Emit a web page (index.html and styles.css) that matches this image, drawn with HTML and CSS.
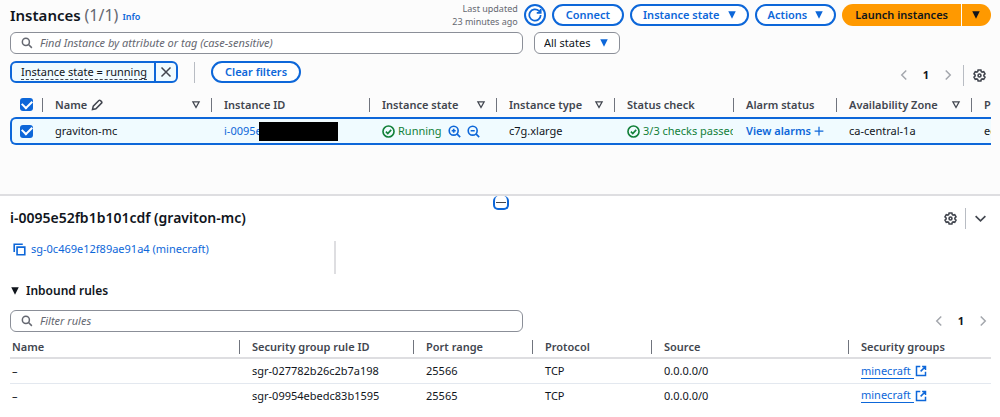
FILE: index.html
```html
<!DOCTYPE html>
<html lang="en">
<head>
<meta charset="utf-8">
<meta name="viewport" content="width=device-width, initial-scale=1">
<title>Instances</title>
<link rel="stylesheet" href="styles.css">
</head>
<body>
<svg class="sprite" aria-hidden="true">
  <symbol id="search" viewBox="0 0 16 16"><circle cx="6.5" cy="6.5" r="4.7"/><path d="M10 10l4.5 4.5"/></symbol>
  <symbol id="gear" viewBox="0 0 16 16"><path d="M6.3 1.2h3.4l.5 2 1 .6 2-.6 1.600 2.800-1.400 1.400v1.200l1.400 1.400-1.600 2.800-2-.6-1 .6-.5 2H6.300l-.5-2-1-.6-2 .6-1.600-2.800 1.400-1.400V7.400L1.200 6l1.600-2.800 2 .6 1-.6z"/><circle cx="8" cy="8" r="1.800"/></symbol>
  <symbol id="check" viewBox="0 0 16 16"><circle cx="8" cy="8" r="6.8"/><path d="M4.800 8.200l2.300 2.300 4.200-4.500"/></symbol>
  <symbol id="left" viewBox="0 0 16 16"><path d="M11 2L5 8l6 6"/></symbol>
  <symbol id="right" viewBox="0 0 16 16"><path d="M5 2l6 6-6 6"/></symbol>
  <symbol id="down" viewBox="0 0 16 16"><path d="M2 5l6 6 6-6"/></symbol>
  <symbol id="sort" viewBox="0 0 16 16"><path d="M3 3h10l-5 9z"/></symbol>
  <symbol id="caret" viewBox="0 0 16 16"><path class="solid" d="M2 2h12l-6 12z"/></symbol>
  <symbol id="external" viewBox="0 0 16 16"><path d="M7 2H2v12h12V9M9.500 2H14v4.500M14 2L7.500 8.500"/></symbol>
  <symbol id="plus" viewBox="0 0 16 16"><path d="M8 1v14M1 8h14"/></symbol>
</svg>

<section class="panel instances">
  <header class="title-bar">
    <h1>Instances <span class="count">(1/1)</span></h1>
    <a class="info" href="#info">Info</a>
    <div class="actions">
      <p class="updated">Last updated<br>23 minutes ago</p>
      <button class="btn round" aria-label="Refresh"><svg class="icon" viewBox="0 0 16 16"><path d="M14.500 8a6.500 6.500 0 1 1-2-4.700L14 5M14.500 1v4.500H10"/></svg></button>
      <button class="btn">Connect</button>
      <button class="btn menu">Instance state <svg class="icon small"><use href="#caret"/></svg></button>
      <button class="btn menu">Actions <svg class="icon small"><use href="#caret"/></svg></button>
      <div class="split">
        <button class="launch">Launch instances</button>
        <button class="launch more" aria-label="More launch options"><svg class="icon small"><use href="#caret"/></svg></button>
      </div>
    </div>
  </header>

  <div class="filters">
    <label class="search"><svg class="icon"><use href="#search"/></svg><input type="text" aria-label="Find instances" placeholder="Find Instance by attribute or tag (case-sensitive)"></label>
    <div class="select">
      <select aria-label="State"><option>All states</option></select>
      <svg class="icon small"><use href="#caret"/></svg>
    </div>
  </div>

  <div class="tokens">
    <div class="token">
      <button class="token-text"><span>Instance state = running</span></button>
      <button class="token-close" aria-label="Remove filter"><svg class="icon" viewBox="0 0 16 16"><path d="M2 2l12 12M14 2L2 14"/></svg></button>
    </div>
    <span class="rule"></span>
    <button class="btn">Clear filters</button>
    <nav class="pager raised" aria-label="Instance pages">
      <button class="plain muted" aria-label="Previous page"><svg class="icon"><use href="#left"/></svg></button>
      <button class="plain page">1</button>
      <button class="plain muted" aria-label="Next page"><svg class="icon"><use href="#right"/></svg></button>
      <span class="rule"></span>
      <button class="plain" aria-label="Preferences"><svg class="icon large"><use href="#gear"/></svg></button>
    </nav>
  </div>

  <table class="instance-table">
    <colgroup><col class="c-check"><col><col class="c-id"><col class="c-state"><col class="c-type"><col class="c-status"><col class="c-alarm"><col class="c-zone"><col class="c-last"></colgroup>
    <thead>
      <tr>
        <th><input type="checkbox" checked aria-label="Select all instances"></th>
        <th><div class="head">Name <svg class="icon" viewBox="0 0 16 16"><path d="M2 14l1-4.500L10.500 2q1-1 2 0l1.500 1.500q1 1 0 2L6.500 13z"/></svg><svg class="icon small push"><use href="#sort"/></svg></div></th>
        <th><div class="head">Instance ID</div></th>
        <th><div class="head">Instance state<svg class="icon small push"><use href="#sort"/></svg></div></th>
        <th><div class="head">Instance type<svg class="icon small push"><use href="#sort"/></svg></div></th>
        <th><div class="head">Status check</div></th>
        <th><div class="head">Alarm status</div></th>
        <th><div class="head">Availability Zone<svg class="icon small push"><use href="#sort"/></svg></div></th>
        <th><div class="head">P</div></th>
      </tr>
    </thead>
    <tbody>
      <tr>
        <td><input type="checkbox" checked aria-label="Select graviton-mc"></td>
        <td>graviton-mc</td>
        <td><div class="cell"><a href="#instance">i-0095e</a><span class="redacted"></span></div></td>
        <td><div class="cell ok"><svg class="icon large"><use href="#check"/></svg>Running
          <button class="plain zoom" aria-label="Include state"><svg class="icon large" viewBox="0 0 16 16"><circle cx="7" cy="7" r="5.500"/><path d="M11 11l4 4M4.500 7h5M7 4.500v5"/></svg></button>
          <button class="plain zoom" aria-label="Exclude state"><svg class="icon large" viewBox="0 0 16 16"><circle cx="7" cy="7" r="5.500"/><path d="M11 11l4 4M4.500 7h5"/></svg></button></div></td>
        <td>c7g.xlarge</td>
        <td><div class="cell ok"><svg class="icon large"><use href="#check"/></svg>3/3 checks passed</div></td>
        <td><a class="cell strong" href="#alarms">View alarms <svg class="icon small"><use href="#plus"/></svg></a></td>
        <td>ca-central-1a</td>
        <td>ec</td>
      </tr>
    </tbody>
  </table>
</section>

<section class="panel details">
  <button class="handle" aria-label="Resize panel"></button>
  <header class="detail-bar">
    <h2>i-0095e52fb1b101cdf (graviton-mc)</h2>
    <div class="tools">
      <button class="plain" aria-label="Panel preferences"><svg class="icon large"><use href="#gear"/></svg></button>
      <span class="rule"></span>
      <button class="plain" aria-label="Collapse panel"><svg class="icon large"><use href="#down"/></svg></button>
    </div>
  </header>

  <div class="groups">
    <div class="group">
      <button class="plain copy" aria-label="Copy"><svg class="icon large" viewBox="0 0 16 16"><path d="M5 5h9.500v9.500H5zM1.500 11V1.500H12"/></svg></button>
      <a href="#group">sg-0c469e12f89ae91a4 (minecraft)</a>
    </div>
  </div>

  <details open>
    <summary><svg class="icon small"><use href="#caret"/></svg>Inbound rules</summary>
    <div class="filters rules-filter">
      <label class="search"><svg class="icon"><use href="#search"/></svg><input type="text" aria-label="Filter rules" placeholder="Filter rules"></label>
      <nav class="pager" aria-label="Rule pages">
        <button class="plain muted" aria-label="Previous page"><svg class="icon"><use href="#left"/></svg></button>
        <button class="plain page">1</button>
        <button class="plain muted" aria-label="Next page"><svg class="icon"><use href="#right"/></svg></button>
      </nav>
    </div>
    <table class="rules-table">
      <colgroup><col class="r-name"><col class="r-id"><col class="r-port"><col class="r-port"><col><col class="r-group"></colgroup>
      <thead>
        <tr><th><div class="head">Name</div></th><th><div class="head">Security group rule ID</div></th><th><div class="head">Port range</div></th><th><div class="head">Protocol</div></th><th><div class="head">Source</div></th><th><div class="head">Security groups</div></th></tr>
      </thead>
      <tbody>
        <tr><td>–</td><td>sgr-027782b26c2b7a198</td><td>25566</td><td>TCP</td><td>0.0.0.0/0</td><td><a class="cell external" href="#minecraft"><span>minecraft </span><svg class="icon"><use href="#external"/></svg></a></td></tr>
        <tr><td>–</td><td>sgr-09954ebedc83b1595</td><td>25565</td><td>TCP</td><td>0.0.0.0/0</td><td><a class="cell external" href="#minecraft"><span>minecraft </span><svg class="icon"><use href="#external"/></svg></a></td></tr>
      </tbody>
    </table>
  </details>
</section>
</body>
</html>
```
FILE: styles.css
```css
:root {
  --blue: #0d67d9;
  --ink: #10151c;
  --head: #42464f;
  --grey: #8b8f98;
}

* { box-sizing: border-box; }

body {
  margin: 0;
  background: #fff;
  color: var(--ink);
  font: 11px/16px "Noto Sans", "Open Sans", sans-serif;
}

button, input, select { font: inherit; color: inherit; }
button { cursor: pointer; }
h1, h2, p { margin: 0; }
a { color: var(--blue); text-decoration: none; }

.sprite { display: none; }
.icon { width: 12px; height: 12px; flex: none; fill: none; stroke: currentColor; stroke-width: 2; }
.icon.small { width: 10px; height: 10px; }
.icon.large { width: 13px; height: 13px; }
.solid { fill: currentColor; stroke: none; }

.panel { padding: 0 9px 0 10px; }
.instances { background: #fcfcfc; padding-top: 4px; padding-bottom: 49px; }

.title-bar { display: flex; align-items: center; height: 22px; }
h1 { font-size: 15px; line-height: 22px; font-weight: 600; }
.count { color: #656871; font-size: 16px; font-weight: 400; }
.info { margin: 4px 0 0 4px; font-size: 9px; font-weight: 600; }
.actions { display: flex; align-items: center; gap: 6px; margin-left: auto; }
.updated { color: #656871; font-size: 9px; line-height: 13px; text-align: right; }

.btn {
  display: flex;
  align-items: center;
  gap: 7px;
  height: 22px;
  padding: 0 12px;
  border: 2px solid var(--blue);
  border-radius: 11px;
  background: #fff;
  color: var(--blue);
  font-weight: 600;
  white-space: nowrap;
}
.btn.menu { padding: 0 10px 0 11px; }
.btn.round { width: 22px; padding: 0; justify-content: center; }
.btn.round .icon { width: 14px; height: 14px; }

.split { display: flex; gap: 1px; }
.launch {
  height: 22px;
  padding: 0 13px;
  border: 0;
  border-radius: 11px 0 0 11px;
  background: #ff9900;
  font-weight: 600;
}
.launch.more { display: flex; align-items: center; width: 29px; padding: 0 9px; border-radius: 0 11px 11px 0; }

.filters { display: flex; align-items: center; gap: 11px; margin-top: 6px; }
.search {
  display: flex;
  align-items: center;
  gap: 7px;
  flex: 0 1 513px;
  height: 22px;
  padding: 0 10px;
  border: 1px solid var(--grey);
  border-radius: 6px;
  background: #fff;
  color: #656871;
}
.search input { flex: 1; min-width: 0; padding: 0; border: 0; outline: 0; background: none; }
.search input::placeholder { color: #656871; font-style: italic; opacity: 1; }
.select { display: grid; align-items: center; color: var(--blue); }
.select > * { grid-area: 1 / 1; }
.select select {
  appearance: none;
  width: 86px;
  height: 22px;
  padding: 0 9px;
  border: 1px solid var(--grey);
  border-radius: 6px;
  background: #fff;
  color: var(--ink);
}
.select .icon { justify-self: end; margin-right: 11px; pointer-events: none; }

.tokens { display: flex; align-items: center; gap: 16px; height: 22px; margin-top: 7px; }
.token {
  display: flex;
  height: 22px;
  border: 2px solid var(--blue);
  border-radius: 6px;
  background: #f0fbff;
}
.token button { padding: 0 7px 0 9px; border: 0; background: none; }
.token .token-close { display: flex; align-items: center; padding: 0 4px; border-left: 2px solid var(--blue); color: var(--head); }
.token-text span { display: block; line-height: 15px; border-bottom: 1px dashed var(--head); }
.rule { width: 1px; height: 21px; background: #b8bcc3; }

.plain { display: flex; padding: 0; border: 0; background: none; color: var(--head); }
.pager { display: flex; align-items: center; gap: 13px; margin-left: auto; padding-right: 2px; }
.pager.raised { gap: 9px; padding: 6px 5px 0 0; }
.pager.raised .page { padding: 0 4px; }
.muted { color: #a4a7ad; }
.page { color: var(--ink); font-weight: 700; }

table { width: 100%; table-layout: fixed; border-collapse: separate; border-spacing: 0; }
th, td { padding: 0 0 0 13px; overflow: hidden; white-space: nowrap; text-align: left; }
th { color: var(--head); font-weight: 600; }
th + th .head {
  border-left: 1px solid #70747d;
  margin-left: -13px;
  padding-left: 12px;
}
.head { display: flex; align-items: center; gap: 4px; height: 14px; }
.head .push { margin: 0 10px 0 auto; }
.cell { display: flex; align-items: center; gap: 3px; }

.instance-table { margin-top: 9px; }
.instance-table th { height: 25px; }
.instance-table td { height: 28px; background: #f0fbff; border: solid var(--blue); border-width: 2px 0; }
.instance-table th:first-child, .instance-table td:first-child { padding-left: 10px; }
.instance-table td:first-child { border-left-width: 2px; border-radius: 6px 0 0 6px; padding-left: 8px; }
.c-check { width: 32px; }
.c-id { width: 158px; }
.c-state { width: 127px; }
.c-type { width: 118px; }
.c-status { width: 119px; }
.c-alarm { width: 103px; }
.c-zone { width: 135px; }
.c-last { width: 20px; }

input[type="checkbox"] {
  appearance: none;
  display: grid;
  place-items: center;
  width: 13px;
  height: 13px;
  margin: 0;
  border-radius: 3px;
  background: var(--blue);
}
input[type="checkbox"]::after {
  content: "";
  width: 8px;
  height: 5px;
  margin-bottom: 3px;
  border: solid #fff;
  border-width: 0 0 2px 2px;
  transform: rotate(-45deg);
}

.ok { color: #128039; }
.zoom { color: var(--blue); margin-left: 3px; }
.strong { font-weight: 600; }
.redacted { width: 79px; height: 19px; margin-left: -6px; background: #000; }

.details { position: relative; border-top: 2px solid #dedee1; padding-top: 12px; padding-bottom: 9px; }
.handle {
  position: absolute;
  top: 0;
  left: 50%;
  width: 16px;
  height: 14px;
  margin-left: -7px;
  padding: 0 1px;
  border: 2px solid var(--blue);
  border-top: 0;
  border-radius: 5px;
  background: #fff;
}
.handle::before { content: ""; display: block; height: 1px; background: var(--head); }

.detail-bar { display: flex; align-items: center; justify-content: space-between; height: 20px; }
h2 { font-size: 14px; line-height: 20px; font-weight: 600; }
.tools { display: flex; align-items: center; gap: 8px; padding-right: 4px; }
.groups { display: flex; margin-top: 13px; }
.group { display: flex; align-items: flex-start; gap: 5px; width: 326px; height: 33px; padding-left: 3px; border-right: 2px solid #dedee1; }
.copy { color: var(--blue); margin-top: 2px; }

summary { display: flex; align-items: center; gap: 6px; margin-top: 7px; list-style: none; font-size: 12px; line-height: 20px; font-weight: 600; cursor: pointer; }
.rules-filter { margin-top: 9px; }

.rules-table { margin-top: 5px; }
.rules-table th { height: 22px; border-bottom: 2px solid #dedee1; }
.rules-table td { height: 24px; }
.rules-table tbody tr + tr td { border-top: 1px solid #e3e8ef; }
.rules-table th:first-child, .rules-table td:first-child { padding-left: 2px; }
.r-name { width: 229px; }
.r-id { width: 174px; }
.r-port { width: 119px; }
.r-group { width: 143px; }
.external span { border-bottom: 1px solid var(--blue); line-height: 14px; white-space: pre; }
.external { gap: 1px; }
```
